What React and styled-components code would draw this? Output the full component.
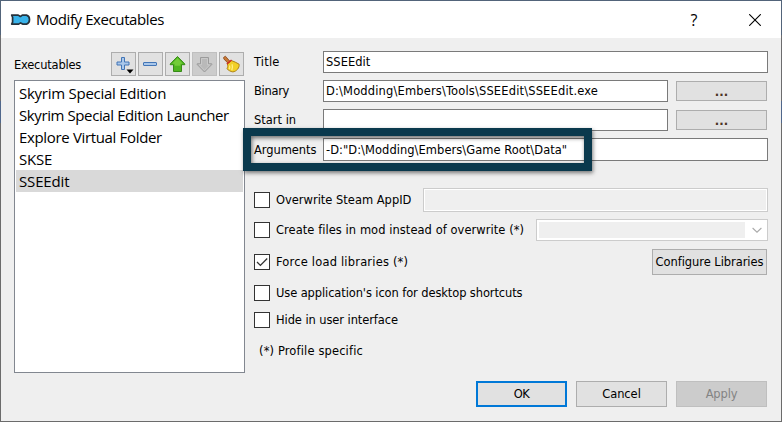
import React from 'react';
import styled, { createGlobalStyle, css } from 'styled-components';

const Global = createGlobalStyle`
  *, *::before { box-sizing: border-box; }
  body { margin: 0; overflow: hidden; }
`;

const uiFont = '"DejaVu Sans Condensed", "DejaVu Sans", sans-serif';
const listFont = '"Open Sans", "Noto Sans", sans-serif';

const Frame = styled.div`
  width: 782px;
  height: 422px;
  padding: 1px;
  background: linear-gradient(#52647a 35px, #6c6c6e 35px 101px, #50678b 101px 123px, #6b6b6b 123px);
`;

const Dialog = styled.div`
  display: flex;
  flex-direction: column;
  width: 780px;
  height: 420px;
  background: #efefef;
  color: #000;
  font: 12.75px/16px ${uiFont};
  white-space: pre;
`;

const TitleBar = styled.header`
  display: flex;
  align-items: center;
  flex: none;
  height: 37px;
  padding: 0 20px 0 9px;
  background: #fff;
`;

const WindowTitle = styled.h1`
  flex: 1;
  margin: 0 0 1px 5px;
  font: 400 15px/22px ${listFont};
  letter-spacing: -0.4px;
`;

const HelpMark = styled.span`
  width: 12px;
  margin-right: 49px;
  font: 16px/22px ${listFont};
  text-align: center;
`;

const Text = styled.span`
  letter-spacing: ${(p) => p.$track ?? 0}px;
`;

const Body = styled.main`
  display: flex;
  flex: 1;
  min-height: 0;
`;

const ListColumn = styled.section`
  flex: none;
  width: 231px;
  margin-left: 13px;
`;

const Toolbar = styled.div`
  display: flex;
  align-items: center;
  gap: 2px;
  height: 24px;
  margin-top: 14px;
  padding-right: 1px;
`;

const ToolbarLabel = styled(Text)`
  flex: 1;
  padding-top: 1px;
`;

const ToolButton = styled.button`
  display: flex;
  align-items: center;
  justify-content: center;
  width: 25px;
  height: 24px;
  padding: 0;
  border: 1px solid ${(p) => (p.disabled ? '#bfbfbf' : '#adadad')};
  background: ${(p) => (p.disabled ? '#cccccc' : '#e1e1e1')};
`;

const List = styled.ul`
  height: 293px;
  margin: 4px 0 0;
  padding: 1px 1px;
  border: 1px solid #828790;
  background: #fff;
  list-style: none;
`;

const ListItem = styled.li`
  height: 22px;
  padding-left: 3px;
  background: ${(p) => (p.$selected ? '#d9d9d9' : 'transparent')};
  font: 15px/22px ${listFont};
  letter-spacing: ${(p) => p.$track}px;
`;

const Form = styled.section`
  display: flex;
  flex-direction: column;
  width: 514px;
  margin-left: 9px;
  padding-top: 13px;
`;

const FieldRow = styled.div`
  display: flex;
  align-items: center;
  height: ${(p) => p.$height || 22}px;
  margin-bottom: 7px;
`;

const FieldLabel = styled(Text)`
  flex: none;
  width: 69px;
`;

const Field = styled.div`
  flex: 1;
  height: 100%;
  padding: ${(p) => p.$pad ?? 2}px 2px;
  border: 1px solid #7a7a7a;
  background: #fff;
`;

const ArgumentsRow = styled(FieldRow)`
  position: relative;
  height: 23px;
  margin-bottom: 27px;
`;

const Highlight = styled.div`
  position: absolute;
  left: -11px;
  top: -10px;
  width: 349px;
  height: 43px;
  border: 8px solid #0a394d;
  box-shadow: 1px 2px 4px rgba(0, 0, 0, 0.5), inset 1px 2px 4px rgba(0, 0, 0, 0.55);
`;

const buttonKinds = {
  normal: css`border: 1px solid #adadad; background: #e1e1e1;`,
  primary: css`border: 2px solid #0078d7; background: #e1e1e1;`,
  disabled: css`border: 1px solid #bfbfbf; background: #cccccc; color: #838383;`,
};

const Button = styled.button`
  flex: none;
  width: ${(p) => p.$width || 91}px;
  height: 26px;
  padding: 0;
  color: #000;
  font: 12.75px/16px ${uiFont};
  text-align: center;
  ${(p) => buttonKinds[p.$kind || 'normal']}
`;

const BrowseButton = styled(Button)`
  display: flex;
  align-items: center;
  justify-content: center;
  height: 20px;
  margin: 0 1px 0 8px;
  padding-top: 2px;
  color: #4a3323;
  font-weight: 700;
  font-size: 13px;
`;

const OptionRow = styled.div`
  display: flex;
  align-items: center;
  height: ${(p) => p.$height}px;
  margin-bottom: ${(p) => p.$gap}px;
`;

const OptionLabel = styled.label`
  display: flex;
  flex: 1;
  align-items: center;
  gap: 6px;
`;

const Box = styled.span`
  display: flex;
  flex: none;
  width: 16px;
  height: 16px;
  border: 1px solid #333;
  background: #fff;
`;

const OptionAction = styled.div`
  padding-right: 1px;
`;

const DisabledField = styled.div`
  flex: none;
  width: 345px;
  height: 24px;
  border: 1px solid #ccc;
  background: #efefef;
  box-shadow: inset 0 0 0 1px #fff;
`;

const Combo = styled.div`
  display: flex;
  align-items: center;
  flex: none;
  width: 232px;
  height: 22px;
  padding: 2px;
  border: 1px solid #ccc;
  background: #fff;
`;

const ComboValue = styled.div`
  flex: none;
  width: 206px;
  height: 16px;
  margin-right: 7px;
  background: #efefef;
`;

const Note = styled(Text)`
  padding-left: 5px;
`;

const Footer = styled.footer`
  display: flex;
  justify-content: flex-end;
  flex: none;
  gap: 9px;
  height: 40px;
  padding-right: 14px;
`;

const LogoIcon = () => (
  <svg width="21" height="14" viewBox="0 0 21 14">
    <path
      d="M1.7 2.1h6.5l2.2 1.4 1.9-1.4h4.2c1.9.5 3 2.3 3 4.4s-1.1 4.1-3 4.6h-3.9l-2-1.2-1.9 1.2h-7l.9-2V4.3z"
      fill="#39b3ea" stroke="#26323b" strokeWidth="1.7" strokeLinejoin="round"
    />
  </svg>
);

const CloseIcon = () => (
  <svg width="12" height="12" viewBox="0 0 12 12">
    <path d="M.2.2l11.6 11.6M11.8.2L.2 11.8" stroke="#000" strokeWidth="1.1" />
  </svg>
);

const PlusIcon = () => (
  <svg width="23" height="22" viewBox="0 0 23 22">
    <path
      d="M9.5 4.5h3v4.5h4.5v3h-4.5v4.5h-3v-4.5h-4.5v-3h4.5z"
      fill="#a9c7ea" stroke="#4275b6" strokeLinejoin="round"
    />
    <path d="M14.5 16.5h7l-3.5 4z" fill="#000" />
  </svg>
);

const MinusIcon = () => (
  <svg width="23" height="22" viewBox="0 0 23 22">
    <rect x="4.5" y="9.5" width="13" height="3" rx=".5" fill="#a9c7ea" stroke="#4275b6" />
  </svg>
);

const UpIcon = () => (
  <svg width="23" height="22" viewBox="0 0 23 22">
    <path d="M11.5 3.5l7.3 7.5v.7h-3.3v6.8h-8v-6.8H4.2V11z" fill="#4fb51f" stroke="#378b18" strokeLinejoin="round" />
    <path d="M11.5 5l5.4 5.7h-2.4v2H8.6v-2H6.1z" fill="#7fd442" opacity=".75" />
  </svg>
);

const DownIcon = () => (
  <svg width="23" height="22" viewBox="0 0 23 22">
    <path
      d="M7.5 4.5h8v6.3h3.3v.7l-7.3 7.5-7.3-7.5v-.7h3.3z"
      fill="#b9b9b9" stroke="#9b9b9b" strokeLinejoin="round"
    />
    <path d="M8.5 5.5h6v6.3h2.3l-5.3 5.6-5.3-5.6h2.3z" fill="none" stroke="#c9c9c9" />
  </svg>
);

const BroomIcon = () => (
  <svg width="23" height="22" viewBox="0 0 23 22">
    <path d="M3.6 4.4l1.8-1.2 4.8 5.4-2 1.8-4.4-4.5z" fill="#c87936" stroke="#874519" strokeWidth=".8" />
    <path d="M7.3 10.8l4.2-3.2c2.7 1 5 2 7.6 3.6.7 3.5-2.7 7.4-6.3 7.7-2.3-.3-4.6-1.7-5.9-3.3 1-1.4 1.1-2.8.4-4.8z" fill="#f2cf27" stroke="#a77a0d" strokeWidth=".9" />
    <path d="M9.5 12.5c.6 1.7.3 2.8-.4 3.7M12 11.3c.8 2 .5 4-.2 6" fill="none" stroke="#fff089" strokeWidth="1.2" />
    <path d="M6.9 11l4.7-4" stroke="#cf2f22" strokeWidth="1.6" />
  </svg>
);

const CheckIcon = () => (
  <svg width="14" height="14" viewBox="0 0 14 14">
    <path d="M2 7l3.4 3.4 6.8-6.9" fill="none" stroke="#333" strokeWidth="1.3" />
  </svg>
);

const ChevronIcon = () => (
  <svg width="10" height="7" viewBox="0 0 10 7">
    <path d="M.6 1l4.4 4.2L9.4 1" fill="none" stroke="#aaa" strokeWidth="1.1" />
  </svg>
);

const executables = [
  { name: 'Skyrim Special Edition', track: -0.26 },
  { name: 'Skyrim Special Edition Launcher', track: -0.4 },
  { name: 'Explore Virtual Folder', track: -0.34 },
  { name: 'SKSE', track: -0.25 },
  { name: 'SSEEdit', track: -0.15, selected: true },
];

function Option({ label, track, checked, height, gap, children }) {
  return (
    <OptionRow $height={height} $gap={gap}>
      <OptionLabel>
        <Box>{checked && <CheckIcon />}</Box>
        <Text $track={track}>{label}</Text>
      </OptionLabel>
      {children}
    </OptionRow>
  );
}

export default function App() {
  return (
    <Frame>
      <Global />
      <Dialog>
        <TitleBar>
          <LogoIcon />
          <WindowTitle>Modify Executables</WindowTitle>
          <HelpMark>?</HelpMark>
          <CloseIcon />
        </TitleBar>
        <Body>
          <ListColumn>
            <Toolbar>
              <ToolbarLabel $track={-0.2}>Executables</ToolbarLabel>
              <ToolButton><PlusIcon /></ToolButton>
              <ToolButton><MinusIcon /></ToolButton>
              <ToolButton><UpIcon /></ToolButton>
              <ToolButton disabled><DownIcon /></ToolButton>
              <ToolButton><BroomIcon /></ToolButton>
            </Toolbar>
            <List>
              {executables.map((e) => (
                <ListItem key={e.name} $track={e.track} $selected={e.selected}>{e.name}</ListItem>
              ))}
            </List>
          </ListColumn>
          <Form>
            <FieldRow>
              <FieldLabel $track={0.2}>Title</FieldLabel>
              <Field><Text $track={0.05}>SSEEdit</Text></Field>
            </FieldRow>
            <FieldRow>
              <FieldLabel $track={-0.3}>Binary</FieldLabel>
              <Field><Text $track={0.17}>{'D:\\Modding\\Embers\\Tools\\SSEEdit\\SSEEdit.exe'}</Text></Field>
              <BrowseButton>...</BrowseButton>
            </FieldRow>
            <FieldRow>
              <FieldLabel>Start in</FieldLabel>
              <Field />
              <BrowseButton>...</BrowseButton>
            </FieldRow>
            <ArgumentsRow>
              <FieldLabel $track={-0.05}>Arguments</FieldLabel>
              <Field $pad={3}><Text $track={0.05}>{'-D:"D:\\Modding\\Embers\\Game Root\\Data"'}</Text></Field>
              <Highlight />
            </ArgumentsRow>
            <Option label="Overwrite Steam AppID" height={24} gap={7}>
              <DisabledField />
            </Option>
            <Option label="Create files in mod instead of overwrite (*)" track={0.06} height={22} gap={8}>
              <Combo><ComboValue /><ChevronIcon /></Combo>
            </Option>
            <Option label="Force load libraries (*)" track={0.2} checked height={26} gap={10}>
              <OptionAction>
                <Button $width={115}><Text $track={-0.05}>Configure Libraries</Text></Button>
              </OptionAction>
            </Option>
            <Option label="Use application's icon for desktop shortcuts" track={-0.1} height={16} gap={11} />
            <Option label="Hide in user interface" track={-0.08} height={16} gap={15} />
            <Note $track={0.15}>(*) Profile specific</Note>
          </Form>
        </Body>
        <Footer>
          <Button $kind="primary"><Text $track={-0.6}>OK</Text></Button>
          <Button><Text $track={-0.05}>Cancel</Text></Button>
          <Button $kind="disabled" disabled><Text $track={-0.15}>Apply</Text></Button>
        </Footer>
      </Dialog>
    </Frame>
  );
}
